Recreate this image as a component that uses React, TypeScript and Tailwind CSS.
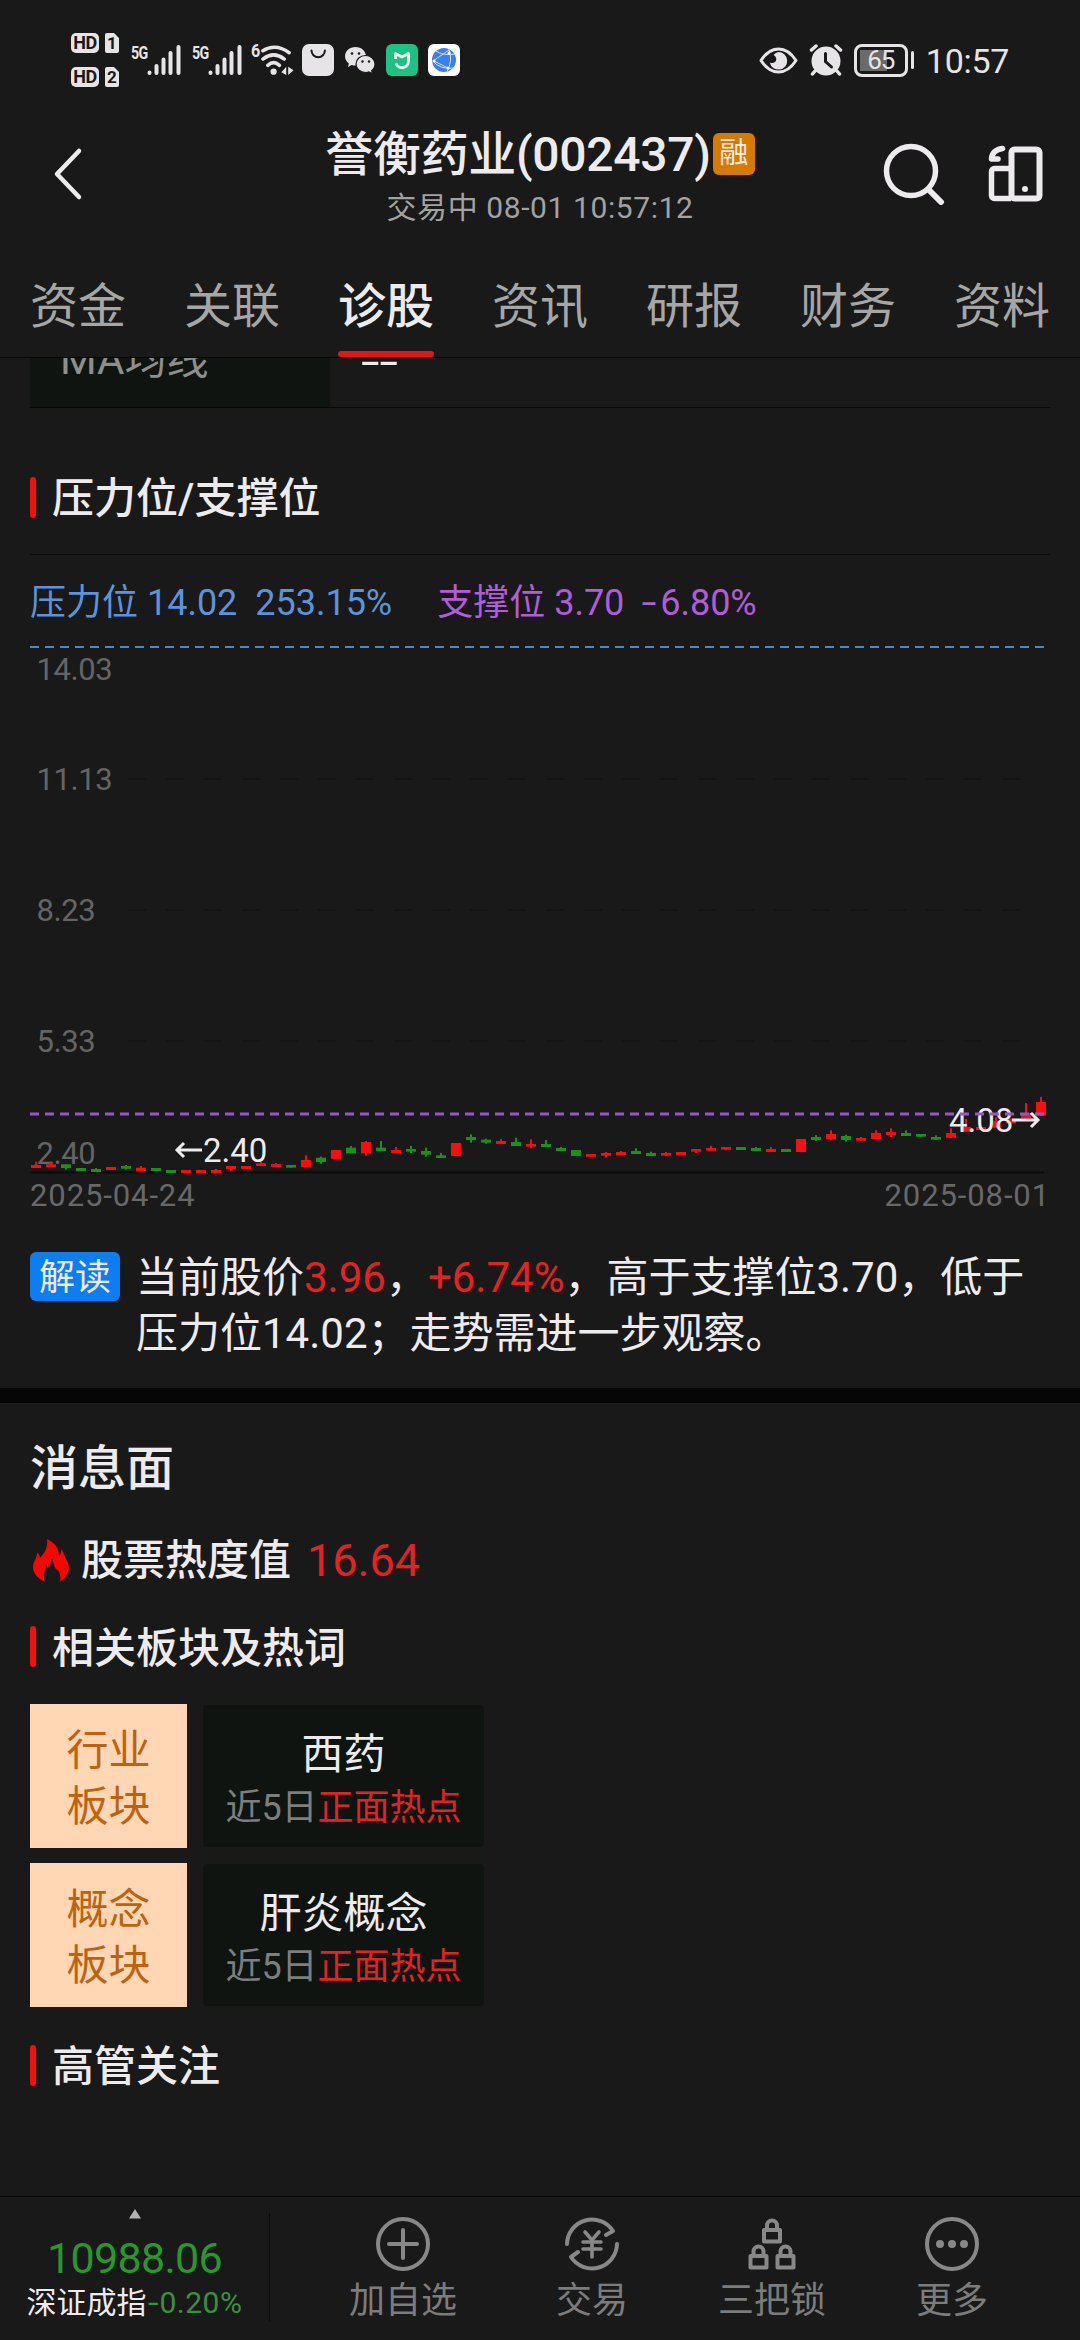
type Candle = [color: "r" | "g", top: number, bottom: number, high?: number, low?: number];

// one entry per trading day, values are y positions inside the k-line strip
const candles: Candle[] = [
  ["r", 375, 384, 365], ["r", 373, 381, 365], ["g", 373, 384, 373, 389], ["g", 384, 393],
  ["g", 387, 396, 384], ["r", 381, 390], ["g", 378, 386, 375, 389], ["r", 383, 393, 378],
  ["g", 384, 393], ["g", 390, 399], ["r", 390, 399], ["r", 390, 399],
  ["r", 390, 399, 387], ["r", 378, 387, 378, 392], ["r", 378, 387], ["r", 370, 378, 365],
  ["r", 372, 381, 369], ["g", 375, 383], ["r", 360, 381, 346], ["g", 353, 366, 350, 371],
  ["r", 330, 357], ["g", 323, 340, 318], ["r", 306, 340, 303, 347], ["g", 323, 333, 303],
  ["r", 330, 339, 321], ["g", 327, 335, 318, 339], ["g", 333, 344, 323, 350], ["g", 346, 354, 339],
  ["r", 309, 348], ["g", 291, 300, 283, 308], ["g", 299, 308, 296, 311], ["r", 303, 312, 297],
  ["g", 306, 318, 293], ["r", 312, 320, 298, 324], ["g", 312, 321, 300], ["g", 324, 333, 321],
  ["g", 330, 348], ["r", 342, 350], ["r", 339, 347, 336, 353], ["r", 336, 345, 333],
  ["g", 333, 342, 325], ["g", 339, 348, 335], ["r", 339, 347, 336], ["r", 336, 345],
  ["r", 327, 335, 327, 339], ["r", 324, 332, 318], ["r", 321, 329, 321, 331], ["g", 321, 330],
  ["g", 324, 333, 321], ["r", 327, 336, 321], ["g", 327, 336], ["r", 297, 336],
  ["g", 291, 300, 285, 303], ["r", 282, 297, 271, 300], ["g", 288, 300, 284, 305], ["r", 294, 302, 291],
  ["r", 279, 297, 271], ["r", 276, 285, 265, 291], ["g", 279, 288, 271], ["g", 282, 290],
  ["g", 291, 299, 286], ["r", 279, 293, 265], ["r", 261, 275, 237], ["r", 261, 270, 255],
  ["r", 243, 263, 232], ["r", 236, 250], ["r", 219, 235, 189], ["r", 186, 227, 171],
];

const tabs = ["资金", "关联", "诊股", "资讯", "研报", "财务", "资料"];

const axisLabels = [
  { text: "14.03", y: 40 },
  { text: "11.13", y: 150 },
  { text: "8.23", y: 281 },
  { text: "5.33", y: 412 },
  { text: "2.40", y: 524 },
];

const plates = [
  { kind: ["行业", "板块"], name: "西药" },
  { kind: ["概念", "板块"], name: "肝炎概念" },
];

function SimBadge({ no }: { no: number }) {
  return (
    <div className="flex h-5 gap-1.5">
      <div className="flex h-5 w-7 items-center justify-center rounded-[5px] bg-[#e6e4e6] text-[18px] leading-5 font-bold tracking-tight text-[#191919]">
        HD
      </div>
      <div className="relative flex h-5 w-3.5 items-center justify-center text-[17px] leading-5 font-bold text-[#191919]">
        <svg className="absolute inset-0" width="14" height="20" viewBox="0 0 14 20">
          <path d="M2 0H9L14 5V18a2 2 0 0 1-2 2H2a2 2 0 0 1-2-2V2a2 2 0 0 1 2-2Z" fill="#e6e4e6" />
        </svg>
        <span className="relative">{no}</span>
      </div>
    </div>
  );
}

function Signal() {
  return (
    <div className="flex h-8 w-[50px]">
      <span className="w-4 text-[19px] leading-[17px] font-bold tracking-[-1px]">
        <span className="inline-block origin-left scale-x-75">5G</span>
      </span>
      <svg width="34" height="32" viewBox="0 0 34 32" stroke="#e6e4e6" strokeWidth="4" strokeLinecap="round">
        <path d="M2.500 28.500V29M9.500 22V29M16.500 15.500V29M23.500 9V29M31.500 3V29" />
      </svg>
    </div>
  );
}

function StatusBar() {
  return (
    <div className="flex h-[120px] items-center pr-[71px] pl-[71px] text-[#e6e4e6]">
      <div className="flex w-12 flex-col gap-3.5">
        <SimBadge no={1} />
        <SimBadge no={2} />
      </div>
      <div className="ml-3">
        <Signal />
      </div>
      <div className="ml-[11px]">
        <Signal />
      </div>
      <div className="ml-[9px] flex h-8 w-[44px]">
        <span className="w-[9px] text-[18px] leading-[14px] font-bold">
          <span className="inline-block origin-left scale-x-90">6</span>
        </span>
        <svg width="36" height="32" viewBox="0 0 36 32" fill="none" stroke="#e6e4e6" strokeWidth="3.6" strokeLinecap="round">
          <path d="M3 6.500Q16 -1.500 30 8.500M3 15Q14 6.500 25 15M8 21.500Q14 16 20 21.500" />
          <circle cx="14" cy="28" r="3.200" fill="#e6e4e6" stroke="none" />
          <path d="M27 23V31.500L22 28.500ZM29 31.500V23L34.500 26.500Z" fill="#e6e4e6" stroke="none" />
        </svg>
      </div>
      <svg className="ml-[7px]" width="32" height="32" viewBox="0 0 32 32">
        <rect width="32" height="32" rx="7" fill="#e6e4e6" />
        <path d="M9.500 6.500a6.700 6.700 0 0 0 13.400 0" fill="none" stroke="#191919" strokeWidth="2" strokeLinecap="round" />
      </svg>
      <svg className="ml-[11px]" width="30" height="27" viewBox="0 0 30 27">
        <path d="M10.500 0C4.500 0 0 4.200 0 9.300c0 3 1.500 5.500 3.800 7.200L3 20l3.600-2c1.300.4 2.600.6 4.400.6C17 18.500 21 14.300 21 9.300S16.500 0 10.500 0Z" fill="#e6e4e6" />
        <path d="M20.500 8.500c-5.300 0-9.500 3.700-9.500 8.500s4.200 8.500 9.500 8.500c1.300 0 2.500-.2 3.500-.6l3.500 1.900-.8-3.200c2.200-1.600 3.300-4 3.300-6.600 0-4.800-4.200-8.500-9.500-8.500Z" fill="#e6e4e6" stroke="#191919" strokeWidth="1.200" />
        <g fill="#191919">
          <circle cx="7" cy="6.500" r="1.300" />
          <circle cx="14" cy="6.500" r="1.300" />
          <circle cx="17.500" cy="14.500" r="1.200" />
          <circle cx="24" cy="14.500" r="1.200" />
        </g>
      </svg>
      <svg className="ml-[11px]" width="32" height="32" viewBox="0 0 32 32" fill="none">
        <rect width="32" height="32" rx="6" fill="#1cc283" />
        <path d="M9.500 15V9.500L16 13L22.500 9.500V16.500a6.500 6.500 0 0 1-12.500 3" stroke="#f2f4f2" strokeWidth="3" strokeLinejoin="round" />
      </svg>
      <svg className="ml-2.5" width="32" height="32" viewBox="0 0 32 32" fill="none">
        <rect width="32" height="32" rx="6" fill="#fff" />
        <circle cx="16" cy="16" r="12" fill="#3b7fea" />
        <path d="M8 7Q15 12 28 10M5 17L21 6M5 17Q12 26 27 24M21 5Q25 16 19 28M6 17L20 24" stroke="#cfe0fb" />
        <g fill="#fff">
          <circle cx="21" cy="9" r="1.500" />
          <circle cx="6" cy="17" r="1.500" />
          <circle cx="20" cy="24" r="1.500" />
        </g>
      </svg>

      <svg className="ml-auto" width="39" height="27" viewBox="0 0 39 27">
        <path d="M2 13.500Q9.500 2 19.500 2T37 13.500Q29.500 25 19.500 25T2 13.500Z" fill="none" stroke="#e6e4e6" strokeWidth="3" strokeLinejoin="round" />
        <path d="M19.500 5a8.800 8.800 0 1 1-8.700 10.500c3 1.500 6.200 0 6.500-3 .2-2-1-3.500-2.800-4.500A8.500 8.500 0 0 1 19.500 5Z" fill="#e6e4e6" />
      </svg>
      <svg className="ml-[11px]" width="34" height="32" viewBox="0 0 34 32">
        <circle cx="17" cy="17" r="14.500" fill="#e6e4e6" />
        <path d="M2.500 6L7 2M31.500 6L27 2M6 27L3.500 30M28 27L30.500 30" stroke="#e6e4e6" strokeWidth="3.500" strokeLinecap="round" />
        <path d="M16.500 9.500V17.500L22.500 23" fill="none" stroke="#191919" strokeWidth="3" strokeLinecap="round" />
      </svg>
      <div className="ml-[11px] flex h-[33px] w-[54px] items-center justify-center rounded-[8px] border-3 border-[#e6e4e6] p-[3px]">
        <div className="flex h-full w-full items-center justify-center bg-[linear-gradient(90deg,#6a6a6a_65%,transparent_65%)] text-[26px] leading-none tracking-[-1px]">
          65
        </div>
      </div>
      <div className="ml-[3px] h-[18px] w-[3px] rounded-full bg-[#e6e4e6]" />
      <span className="ml-3 pt-0.5 text-[34px] leading-10 tracking-[-0.3px]">10:57</span>
    </div>
  );
}

function Header() {
  return (
    <div className="flex h-[108px] items-center pr-[37px] pl-[53px] text-[#eeebee]">
      <svg width="32" height="54" viewBox="0 0 32 54" fill="none">
        <path d="M26 4L4 27L26 50" stroke="#eeebee" strokeWidth="4.500" strokeLinecap="round" strokeLinejoin="round" />
      </svg>
      <div className="ml-[240px] flex w-[430px] flex-col items-center pt-[7px]">
        <div className="flex items-center">
          <h1 className="text-[48px] leading-[60px] font-medium tracking-[-0.3px]">誉衡药业(002437)</h1>
          <div className="mb-0.5 ml-0.5 flex h-[42px] w-[42px] items-center justify-center rounded-[6px] bg-[#d67b00] text-[29px] leading-none">
            融
          </div>
        </div>
        <div className="text-[30px] leading-[46px] tracking-[0.6px] text-[#a2a2a2]">交易中 08-01 10:57:12</div>
      </div>
      <svg className="ml-auto" width="160" height="62" viewBox="0 0 160 62" fill="none" stroke="#eeebee">
        <circle cx="28" cy="28" r="24.500" strokeWidth="5.500" />
        <path d="M46 47L58 59" strokeWidth="6" strokeLinecap="round" />
        <rect x="128.500" y="6.500" width="28" height="49" rx="3" strokeWidth="6" />
        <path d="M127 25.500H111.500a3 3 0 0 0-3 3V52.500a3 3 0 0 0 3 3H128" strokeWidth="5.500" />
        <circle cx="142" cy="46" r="3" fill="#eeebee" stroke="none" />
        <path d="M119.500 5.500Q109 7 108.500 16H115" strokeWidth="5.500" strokeLinecap="round" strokeLinejoin="round" />
      </svg>
    </div>
  );
}

function SectionTitle({ children }: { children: string }) {
  return (
    <div className="flex items-center">
      <div className="h-[41px] w-1.5 rounded-full bg-[#f01010]" />
      <h3 className="ml-4 pt-1 text-[42px] leading-[48px] font-medium">{children}</h3>
    </div>
  );
}

function PriceChart() {
  return (
    <svg className="block" width="1020" height="535" viewBox="0 0 1020 535">
      <g stroke="#111512" strokeWidth="1.500" strokeDasharray="18 20">
        <path d="M98 139H998M98 270H998M98 401H998" />
      </g>
      <path d="M0 532.500H1014" stroke="#0d0d0d" strokeWidth="2" />
      <g fill="#646464" fontSize="31" letterSpacing="-0.400">
        {axisLabels.map((label) => (
          <text key={label.text} x="6.500" y={label.y}>
            {label.text}
          </text>
        ))}
      </g>
      {candles.map(([color, top, bottom, high = top, low = bottom], i) => (
        <g key={i} fill={color === "r" ? "#fb0d0d" : "#179417"}>
          <rect x={1 + i * 15} y={400 + top / 3} width="10" height={(bottom - top) / 3} />
          <rect x={5 + i * 15} y={400 + high / 3} width="2" height={(low - high) / 3} />
        </g>
      ))}
      <g fill="#eeebee" stroke="#eeebee" fontSize="33">
        <path d="M147 510H172M154 503L147 510L154 517M982 480H1008M1001 473L1008 480L1001 487" fill="none" strokeWidth="3" />
        <text x="173" y="522" stroke="none">
          2.40
        </text>
        <text x="919" y="492" stroke="none">
          4.08
        </text>
      </g>
      <path d="M0 7H1015" stroke="#5386c4" strokeWidth="2" strokeDasharray="9 6" />
      <path d="M0 474H1015" stroke="#9a55c4" strokeWidth="3" strokeDasharray="9 6" />
    </svg>
  );
}

function BottomItem({ label, children }: { label: string; children: React.ReactNode }) {
  return (
    <div className="flex w-[180px] flex-col items-center pt-[19px]">
      <svg width="56" height="56" viewBox="0 0 56 56" fill="none" stroke="#888" strokeWidth="4" strokeLinecap="round" strokeLinejoin="round">
        {children}
      </svg>
      <span className="mt-[4px] text-[36px] leading-[50px] text-[#7c7c7c]">{label}</span>
    </div>
  );
}

function Lock({ x, y }: { x: number; y: number }) {
  return (
    <g transform={`translate(${x} ${y})`}>
      <path d="M4.500 10V6.500a5 5 0 0 1 10 0V10" />
      <rect x="1.500" y="11" width="16" height="11.500" />
    </g>
  );
}

function BottomBar() {
  return (
    <div className="flex h-[144px] border-t border-[#070707]">
      <div className="flex w-[269px] flex-col items-center pt-3">
        <svg width="12" height="10" viewBox="0 0 12 10">
          <path d="M6 0L12 9.500H0Z" fill="#b4b2b4" />
        </svg>
        <div className="mt-[14px] text-[43px] leading-[50px] tracking-[-0.7px] text-[#27982a]">10988.06</div>
        <div className="mt-[2px] flex text-[30px] leading-9 whitespace-nowrap">
          深证成指
          <span className="ml-0.5 tracking-[0.5px] text-[#38923a]">
            <span className="mr-0.5 inline-block scale-x-130">-</span>0.20%
          </span>
        </div>
      </div>
      <div className="mt-4 h-[108px] w-px bg-[#090909]" />
      <div className="ml-[43px] flex">
        <BottomItem label="加自选">
          <circle cx="28" cy="28" r="25" />
          <path d="M28 14V42M14 28H42" />
        </BottomItem>
        <div className="w-[9px]" />
        <BottomItem label="交易">
          <path d="M3 28A25 25 0 0 1 49 15L42 19M53 28A25 25 0 0 1 7 41L14 36" />
          <path d="M21 16L28 24L35 16M19 26H37M19 33H37M28 25V41" strokeWidth="3.600" />
        </BottomItem>
        <BottomItem label="三把锁">
          <Lock x={18.5} y={3} />
          <Lock x={5} y={29} />
          <Lock x={32} y={29} />
        </BottomItem>
        <BottomItem label="更多">
          <circle cx="28" cy="28" r="25" />
          <g fill="#888" stroke="none">
            <circle cx="16" cy="28" r="4" />
            <circle cx="28" cy="28" r="4" />
            <circle cx="40" cy="28" r="4" />
          </g>
        </BottomItem>
      </div>
    </div>
  );
}

export default function App() {
  return (
    <div className="flex h-[2340px] w-[1080px] flex-col overflow-hidden bg-[#191919] font-[Roboto,'Noto_Sans_CJK_SC',sans-serif] text-[#eeebee]">
      <StatusBar />
      <Header />

      <div className="flex h-[130px] justify-between border-b border-[#070707] px-[30px] text-[48px]">
        {tabs.map((tab) => (
          <div key={tab} className={`flex flex-col justify-end ${tab === "诊股" ? "font-medium" : "text-[#a6a6a6]"}`}>
            <span className="leading-[60px]">{tab}</span>
            <div className={`mt-[14px] h-1.5 rounded-full ${tab === "诊股" ? "bg-[#e01619]" : ""}`} />
          </div>
        ))}
      </div>

      <div className="flex-1 overflow-hidden">
        <div className="mx-[30px] flex h-[50px] items-end overflow-hidden border-b border-[#070707] text-[42px] leading-[98px]">
          <div className="h-[96px] w-[300px] bg-[#0f1410] pl-[30px] text-[#8e8e8e]">MA均线</div>
          <div className="h-[96px] pt-0.5 pl-[31px]">
            <span className="inline-block origin-left scale-x-160">--</span>
          </div>
        </div>

        <div className="mx-[30px] h-[147px] border-b border-[#0c0c0c] pt-[63px]">
          <SectionTitle>压力位/支撑位</SectionTitle>
        </div>
        <div className="flex h-[85px] items-center px-[30px] pt-[10px] text-[36px] whitespace-pre">
          <span className="text-[#5a94de]">压力位 14.02  253.15%</span>
          <span className="ml-[45px] text-[#b15cd8]">
            支撑位 3.70  <span className="mr-1.5 ml-0.5 inline-block scale-x-150">-</span>6.80%
          </span>
        </div>
        <div className="px-[30px]">
          <PriceChart />
          <div className="flex h-[42px] items-center justify-between pt-px text-[31px] tracking-[0.9px] text-[#686868]">
            <span>2025-04-24</span>
            <span>2025-08-01</span>
          </div>
        </div>
        <div className="mt-[31px] flex h-[112px] px-[30px]">
          <div className="mt-1 flex h-[49px] w-[90px] shrink-0 items-center justify-center rounded-[6px] bg-[#0d7df2] pt-0.5 text-[36px]">
            解读
          </div>
          <p className="ml-4 pt-0.5 text-[42px] leading-[56px] whitespace-nowrap">
            当前股价<span className="text-[#e52222]">3.96</span>，<span className="text-[#e52222]">+6.74%</span>，高于支撑位3.70，低于
            <br />
            压力位14.02；走势需进一步观察。
          </p>
        </div>
        <div className="mt-7 h-[15px] bg-[#060606]" />

        <div className="px-[30px]">
          <h2 className="flex h-[128px] items-center pt-1 text-[48px] font-medium">消息面</h2>
          <div className="flex h-[58px] items-center">
            <svg className="ml-[3px]" width="37" height="43" viewBox="0 0 37 43">
              <path
                d="M14 0C22 4 26 9 26 17C28 15.500 28.500 12.500 28 10C31 13 31 17 33 20C37 27 38 34 27 43C28 37 27 32 23 30C21 28 20 23 19.500 19C17 22 18 26 15 29C14 27.500 14 26 13 25C13 31 9 34 12 43C4 39 0 34 0 28C0 22 4 20 4 13.500C6 15 7 17 7 19C12 14 15 8 14 0Z"
                fill="#fb0404"
              />
            </svg>
            <span className="ml-[11px] text-[42px] font-medium">股票热度值</span>
            <span className="ml-4 pt-0.5 text-[45px] text-[#e52222]">16.64</span>
          </div>
          <div className="flex h-[115px] items-center">
            <SectionTitle>相关板块及热词</SectionTitle>
          </div>
          <div className="flex flex-col gap-[15px]">
            {plates.map((plate) => (
              <div key={plate.name} className="flex h-36 gap-4">
                <div className="flex w-[157px] flex-col items-center justify-center bg-[#ffd7b5] pt-[5px] text-[42px] leading-[56px] text-[#bd6310]">
                  {plate.kind.map((line) => (
                    <span key={line}>{line}</span>
                  ))}
                </div>
                <div className="my-px flex w-[281px] flex-col items-center justify-center rounded-[4px] bg-[#0f1410] pt-[7px]">
                  <span className="text-[42px] leading-[56px]">{plate.name}</span>
                  <span className="text-[36px] leading-[50px] text-[#7e7e7e]">
                    近5日<span className="text-[#e52222]">正面热点</span>
                  </span>
                </div>
              </div>
            ))}
          </div>
          <div className="flex h-[116px] items-center">
            <SectionTitle>高管关注</SectionTitle>
          </div>
        </div>
      </div>

      <BottomBar />
    </div>
  );
}
